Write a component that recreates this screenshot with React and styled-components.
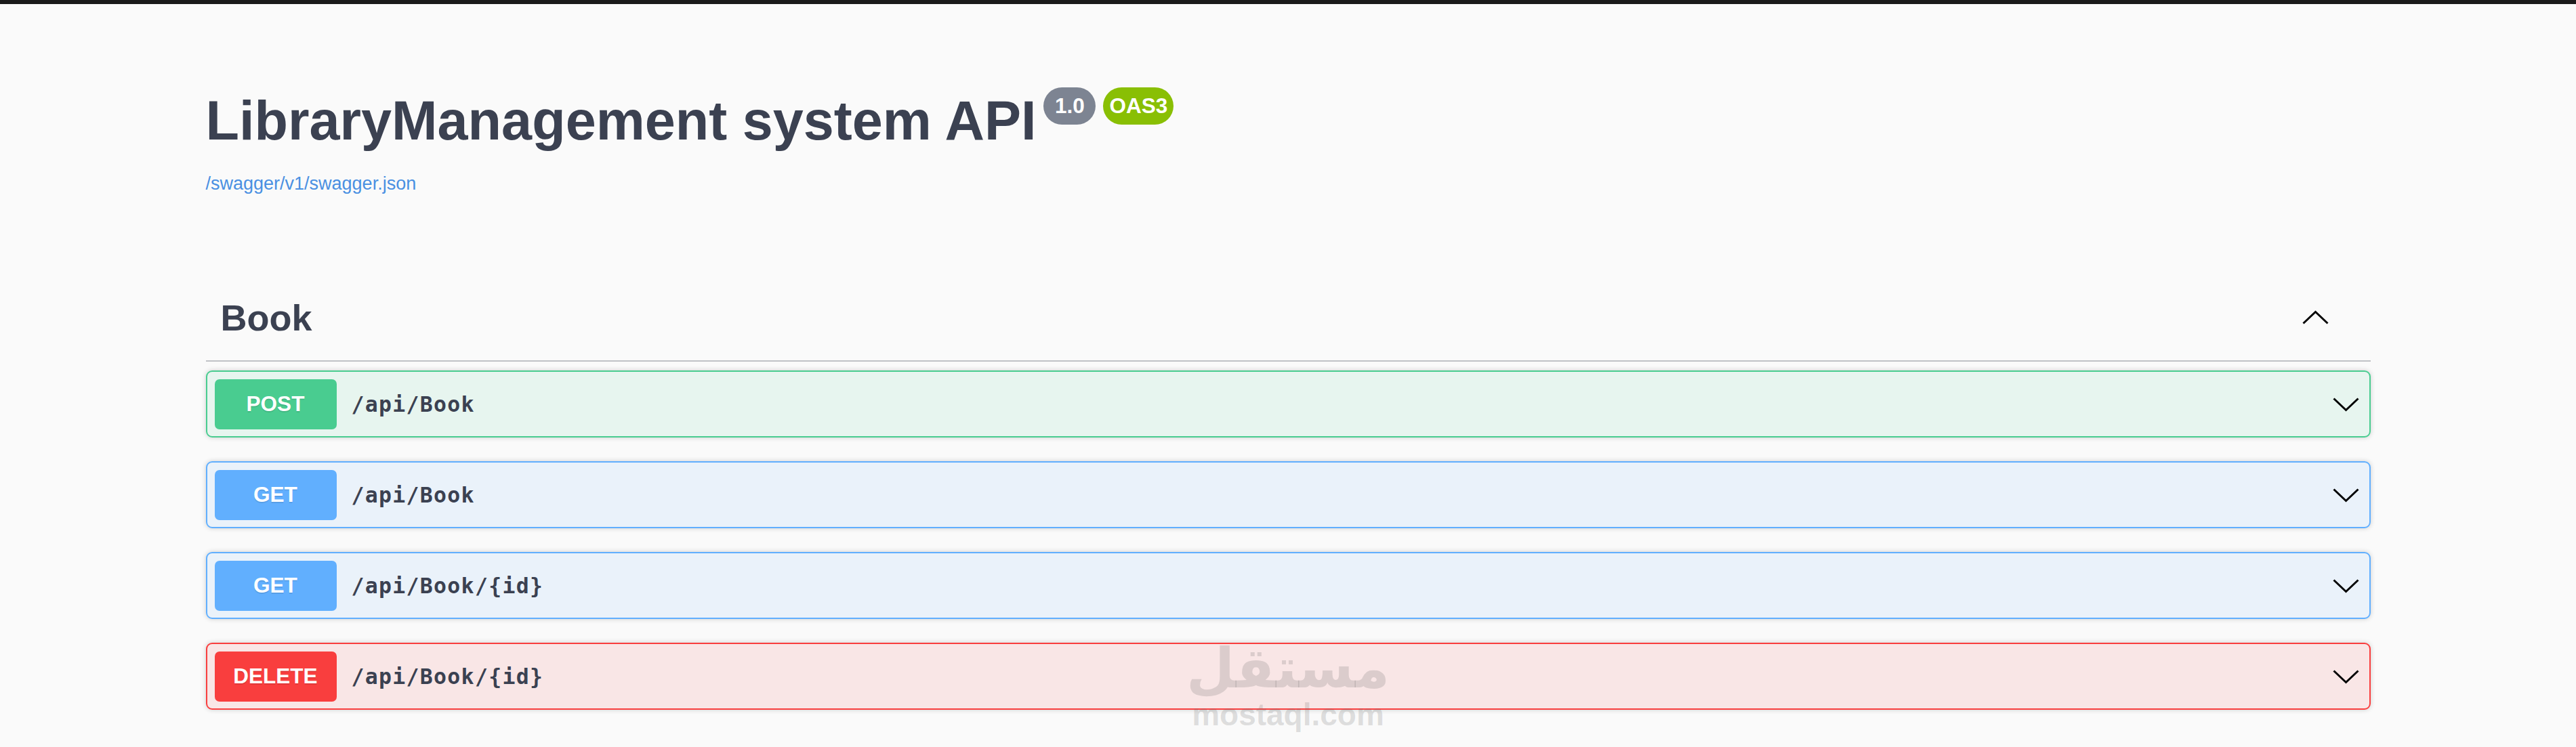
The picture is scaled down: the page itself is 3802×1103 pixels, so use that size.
import React from "react";
import styled, { createGlobalStyle } from "styled-components";

const GlobalStyle = createGlobalStyle`
  html, body {
    margin: 0;
    padding: 0;
    background: #fafafa;
  }
  body {
    font-family: "Liberation Sans", Arial, sans-serif;
    color: #3b4151;
  }
  * {
    box-sizing: border-box;
  }
`;

const methods = {
  POST: { main: "#49cc90", tint: "rgba(73, 204, 144, 0.1)" },
  GET: { main: "#61affe", tint: "rgba(97, 175, 254, 0.1)" },
  DELETE: { main: "#f93e3e", tint: "rgba(249, 62, 62, 0.1)" },
};

const operations = [
  { method: "POST", path: "/api/Book" },
  { method: "GET", path: "/api/Book" },
  { method: "GET", path: "/api/Book/{id}" },
  { method: "DELETE", path: "/api/Book/{id}" },
];

const Page = styled.div`
  position: relative;
  min-height: 1103px;
  background: #fafafa;
  overflow: hidden;
`;

const TopBar = styled.div`
  height: 6px;
  background: #1b1b1b;
`;

const Wrapper = styled.div`
  max-width: 3285px;
  margin: 0 auto;
  padding: 0 45px;
`;

const Info = styled.hgroup`
  display: block;
  margin: 126px 0 0;
`;

const Title = styled.h2`
  display: flex;
  align-items: flex-start;
  margin: 0;
  font-size: 81px;
  line-height: 93px;
  font-weight: 700;
  color: #3b4151;
`;

const Badge = styled.small`
  display: inline-flex;
  align-items: center;
  justify-content: center;
  height: 55px;
  min-width: ${(p) => p.$minWidth || 0}px;
  margin: -3px 0 0 11px;
  padding: 0 9px;
  border-radius: 128px;
  background: ${(p) => p.$bg};
  font-size: 31.5px;
  line-height: 1;
  font-weight: 700;
  color: #fff;
`;

const LinkRow = styled.div`
  margin-top: 31px;
`;

const SpecLink = styled.a`
  display: inline-block;
  font-size: 27px;
  line-height: 31px;
  color: #4a90e2;
  text-decoration: none;
`;

const TagHeader = styled.h3`
  display: flex;
  align-items: center;
  justify-content: space-between;
  height: 129px;
  margin: 118px 0 13px;
  padding: 0 62px 0 22px;
  border-bottom: 2px solid rgba(59, 65, 81, 0.3);
  font-size: 54px;
  line-height: 62px;
  font-weight: 700;
  color: #3b4151;
`;

const Operation = styled.div`
  display: flex;
  align-items: center;
  height: 99px;
  margin: 0 0 35px;
  padding: 0 15px 0 11px;
  border: 2px solid ${(p) => p.$main};
  border-radius: 9px;
  background: ${(p) => p.$tint};
  box-shadow: 0 0 7px rgba(0, 0, 0, 0.19);
`;

const MethodLabel = styled.span`
  display: flex;
  align-items: center;
  justify-content: center;
  min-width: 180px;
  height: 74px;
  border-radius: 7px;
  background: ${(p) => p.$main};
  font-size: 31.5px;
  font-weight: 700;
  color: #fff;
  text-shadow: 0 2px 0 rgba(0, 0, 0, 0.1);
`;

const PathText = styled.span`
  flex: 1;
  padding: 0 22px;
  font-family: "DejaVu Sans Mono", "Liberation Mono", monospace;
  font-size: 31.5px;
  letter-spacing: 1.3px;
  font-weight: 700;
  color: #3b4151;
`;

const Chevron = styled.svg`
  display: block;
  width: 39px;
  height: 20px;
  overflow: visible;
  flex: none;
`;

// mostaql watermark stamped over the screenshot
const Watermark = styled.div`
  position: absolute;
  left: 50%;
  top: 945px;
  transform: translateX(-50%);
  display: flex;
  flex-direction: column;
  align-items: center;
  pointer-events: none;
  color: rgba(100, 100, 100, 0.2);
  font-weight: 700;
`;

const WatermarkArabic = styled.span`
  font-family: "DejaVu Sans", sans-serif;
  font-size: 82px;
  line-height: 84px;
`;

const WatermarkLatin = styled.span`
  font-family: "Liberation Sans", Arial, sans-serif;
  font-size: 46px;
  line-height: 52px;
`;

function Arrow({ up }) {
  return (
    <Chevron viewBox="0 0 39 20">
      <polyline
        points={up ? "1.5,18.5 19.5,1.5 37.5,18.5" : "1.5,1.5 19.5,18.5 37.5,1.5"}
        fill="none"
        stroke="#000"
        strokeWidth="3"
      />
    </Chevron>
  );
}

export default function App() {
  return (
    <Page>
      <GlobalStyle />
      <TopBar />
      <Wrapper>
        <Info>
          <Title>
            LibraryManagement system API
            <Badge $bg="#7d8492" $minWidth={77}>1.0</Badge>
            <Badge $bg="#89bf04">OAS3</Badge>
          </Title>
          <LinkRow>
            <SpecLink href="#">/swagger/v1/swagger.json</SpecLink>
          </LinkRow>
        </Info>

        <TagHeader>
          <span>Book</span>
          <Arrow up />
        </TagHeader>

        {operations.map((op, i) => {
          const c = methods[op.method];
          return (
            <Operation key={i} $main={c.main} $tint={c.tint}>
              <MethodLabel $main={c.main}>{op.method}</MethodLabel>
              <PathText>{op.path}</PathText>
              <Arrow />
            </Operation>
          );
        })}
      </Wrapper>
      <Watermark>
        <WatermarkArabic>مستقل</WatermarkArabic>
        <WatermarkLatin>mostaql.com</WatermarkLatin>
      </Watermark>
    </Page>
  );
}
